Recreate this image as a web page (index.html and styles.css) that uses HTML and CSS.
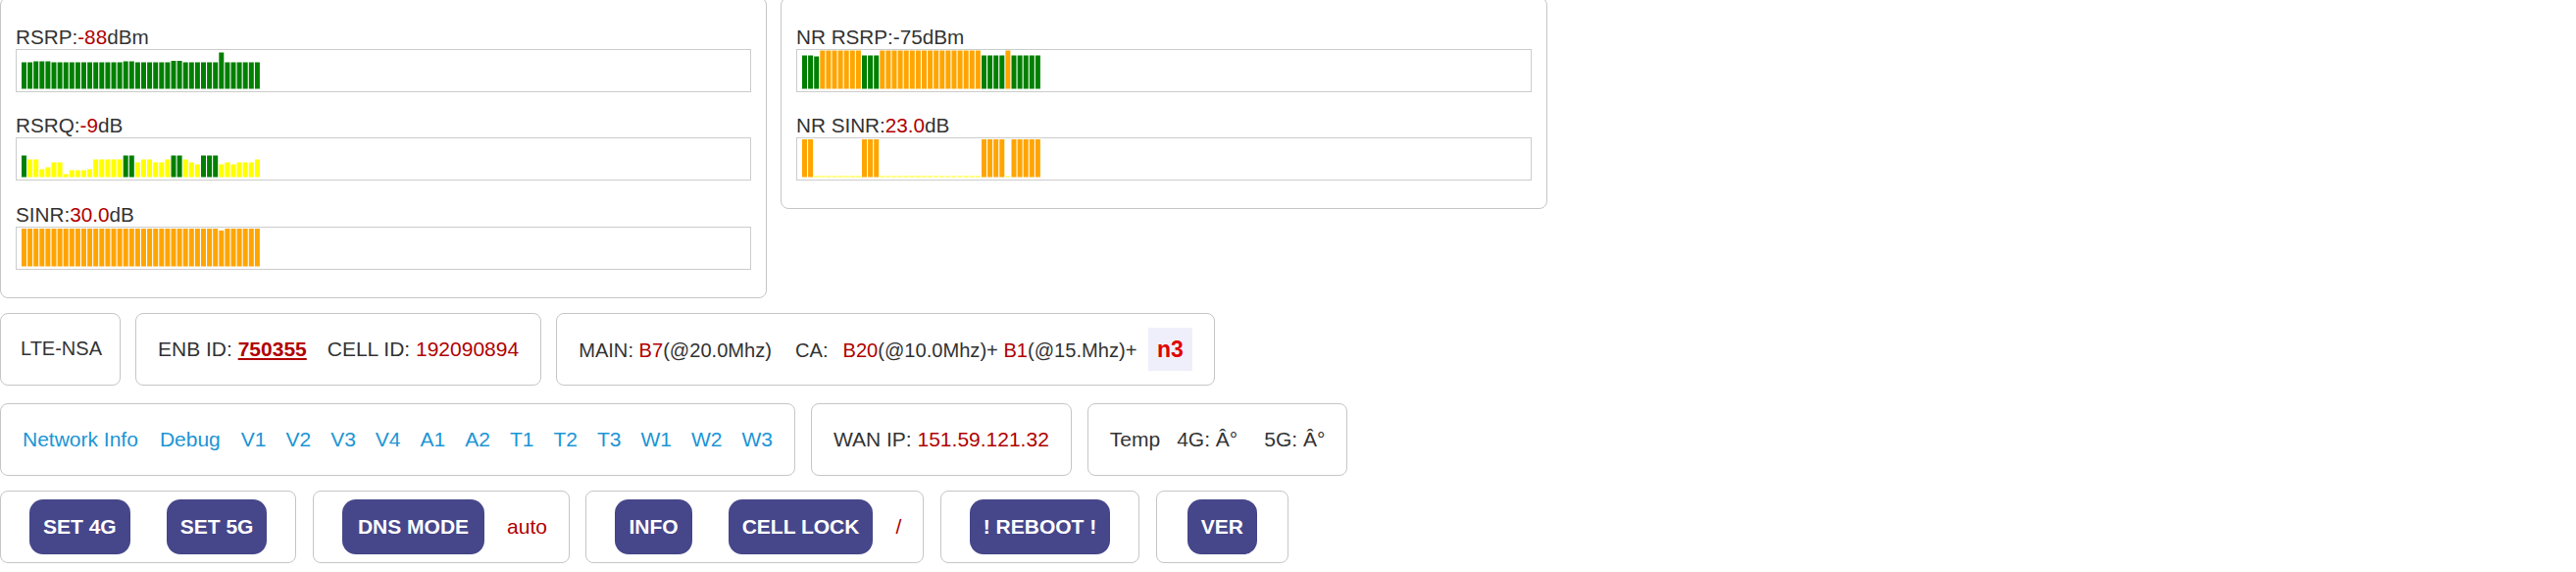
FILE: index.html
```html
<!DOCTYPE html>
<html lang="en">
<head>
    <meta charset="UTF-8">
    <title>Signal Monitor</title>
    <link rel="stylesheet" href="styles.css">
</head>
<body>
    <div class="row panels">
        <div class="panel">
            <div class="label">RSRP:<span class="red">-88</span>dBm</div>
            <div class="chart"><canvas id="rsrp" width="748" height="42"></canvas></div>
            <div class="label">RSRQ:<span class="red">-9</span>dB</div>
            <div class="chart"><canvas id="rsrq" width="748" height="42"></canvas></div>
            <div class="label">SINR:<span class="red">30.0</span>dB</div>
            <div class="chart"><canvas id="sinr" width="748" height="42"></canvas></div>
        </div>
        <div class="panel">
            <div class="label">NR RSRP:-75dBm</div>
            <div class="chart"><canvas id="nr_rsrp" width="748" height="42"></canvas></div>
            <div class="label">NR SINR:<span class="red">23.0</span>dB</div>
            <div class="chart"><canvas id="nr_sinr" width="748" height="42"></canvas></div>
        </div>
    </div>

    <div class="row info">
        <div class="box mode"><div>LTE-NSA</div></div>
        <div class="box">
            <div>ENB ID: <a class="enb" href="#">750355</a><span class="sep">CELL ID:</span> <span class="red">192090894</span></div>
        </div>
        <div class="box bands">
            <div>
                MAIN: <span class="red">B7</span>(@20.0Mhz)<span class="sep">CA:</span><span class="red ca">B20</span>(@10.0Mhz)+ <span class="red">B1</span>(@15.Mhz)+ <span class="nr">n3</span>
            </div>
        </div>
    </div>

    <div class="row links">
        <div class="box">
            <nav class="nav">
                <a href="#">Network Info</a>
                <a href="#">Debug</a>
                <a href="#">V1</a>
                <a href="#">V2</a>
                <a href="#">V3</a>
                <a href="#">V4</a>
                <a href="#">A1</a>
                <a href="#">A2</a>
                <a href="#">T1</a>
                <a href="#">T2</a>
                <a href="#">T3</a>
                <a href="#">W1</a>
                <a href="#">W2</a>
                <a href="#">W3</a>
            </nav>
        </div>
        <div class="box"><div>WAN IP: <span class="red">151.59.121.32</span></div></div>
        <div class="box"><div class="temp"><span>Temp</span><span>4G: Â°</span><span>5G: Â°</span></div></div>
    </div>

    <div class="row actions">
        <div class="box">
            <button>SET 4G</button>
            <button>SET 5G</button>
        </div>
        <div class="box">
            <button class="wide">DNS MODE</button>
            <span class="red">auto</span>
        </div>
        <div class="box">
            <button>INFO</button>
            <button>CELL LOCK</button>
            <span class="red">/</span>
        </div>
        <div class="box">
            <button>! REBOOT !</button>
        </div>
        <div class="box">
            <button>VER</button>
        </div>
    </div>

    <script>
        const G = "#008000", Y = "#ffff00", O = "#ffa500";

        // historial de barras: [altura, color]
        const rsrp = [27,27,28,28,28,27,27,27,27,27,27,27,27,27,27,27,27,28,28,27,27,27,27,27,27,28.5,28.5,27,27,27,27,27,27,37,27,27,27,27,27,27].map(h => [h, G]);

        const rsrqH = [22,18,18,8,10,15,15,3,7,7,7,8,18,18,18,18,18,22,22,15,18,18,15,15,18,22,22,18,15,13,22,22,22,13,15,13,15,15,15,18];
        const rsrqG = [0,17,18,25,26,30,31,32];
        const rsrq = rsrqH.map((h, i) => [h, rsrqG.includes(i) ? G : Y]);

        const sinr = [];
        for (let i = 0; i < 40; i++) sinr.push([i === 33 ? 36.5 : 38.5, O]);

        const nrOrange = i => (i >= 3 && i <= 9) || (i >= 13 && i <= 29) || i === 34;
        const nr_rsrp = [];
        for (let i = 0; i < 40; i++) {
            if (nrOrange(i)) nr_rsrp.push([39, O]);
            else nr_rsrp.push([i === 2 ? 33 : 34, G]);
        }

        const nrSinrO = i => i <= 1 || (i >= 10 && i <= 12) || (i >= 30 && i <= 33) || i >= 35;
        const nr_sinr = [];
        for (let i = 0; i < 40; i++) nr_sinr.push(nrSinrO(i) ? [38.5, O] : [1, Y]);

        function dibujar(id, barras) {
            const ctx = document.getElementById(id).getContext("2d");
            barras.forEach(([h, color], i) => {
                ctx.fillStyle = color;
                ctx.fillRect(5 + i * 6.1, 39.5 - h, 5, h);
            });
        }

        dibujar("rsrp", rsrp);
        dibujar("rsrq", rsrq);
        dibujar("sinr", sinr);
        dibujar("nr_rsrp", nr_rsrp);
        dibujar("nr_sinr", nr_sinr);
    </script>
</body>
</html>
```

FILE: styles.css
```css
body {
    margin: 0;
    font-family: "Liberation Sans", Arial, Helvetica, sans-serif;
    font-size: 21px;
    color: #333;
    background-color: #fff;
}
.red {
    color: #b00000;
}
.row {
    display: flex;
    align-items: stretch;
}
.panels {
    gap: 14px;
    align-items: flex-start;
    margin-top: -3px;
}
.panel {
    width: 750px;
    padding: 5px 15px 28px;
    border: 1px solid #c6c6c6;
    border-radius: 8px;
}
.label {
    margin-top: 22.5px;
    height: 24px;
    line-height: 24px;
    font-size: 20.7px;
}
.chart {
    height: 42px;
    border: 1px solid #cccccc;
}
.chart canvas {
    display: block;
}
.box {
    display: flex;
    align-items: center;
    height: 74px;
    box-sizing: border-box;
    padding: 0 22px;
    border: 1px solid #c6c6c6;
    border-radius: 8px;
}
.info {
    gap: 15px;
    margin-top: 15px;
}
.mode {
    font-size: 20px;
    padding: 0 18px 0 20px;
}
.enb {
    color: #b00000;
    font-weight: 700;
    text-decoration: underline;
}
.sep {
    margin-left: 21px;
}
.bands {
    font-size: 20.1px;
}
.bands .sep {
    margin-left: 24px;
}
.ca {
    margin-left: 15px;
}
.nr {
    display: inline-block;
    margin-left: 6px;
    padding: 0 9px;
    height: 44px;
    line-height: 44px;
    background-color: #efeffb;
    color: #e00000;
    font-weight: 700;
    font-size: 23px;
}
.links {
    gap: 16px;
    margin-top: 18px;
}
.nav {
    display: flex;
    gap: 20px;
}
.nav a {
    color: #1b95d5;
    text-decoration: none;
}
.nav a:first-child {
    margin-right: 2px;
}
.nav a:nth-child(2) {
    margin-right: 1px;
}
.temp {
    display: flex;
    gap: 17px;
}
.temp span:last-child {
    margin-left: 10px;
}
.actions {
    gap: 16.5px;
    margin-top: 15px;
}
.actions .box {
    padding: 0 15px;
    gap: 9px;
}
.actions .box > .red {
    margin-right: 7px;
}
.actions .box:last-child {
    padding: 0 17px;
}
button {
    margin: 0 14px;
    height: 56px;
    padding: 0 14px;
    border: none;
    border-radius: 14px;
    background-color: #46468a;
    color: white;
    font-family: inherit;
    font-size: 21px;
    font-weight: 700;
    cursor: pointer;
}
button.wide {
    padding: 0 16px;
}
```
